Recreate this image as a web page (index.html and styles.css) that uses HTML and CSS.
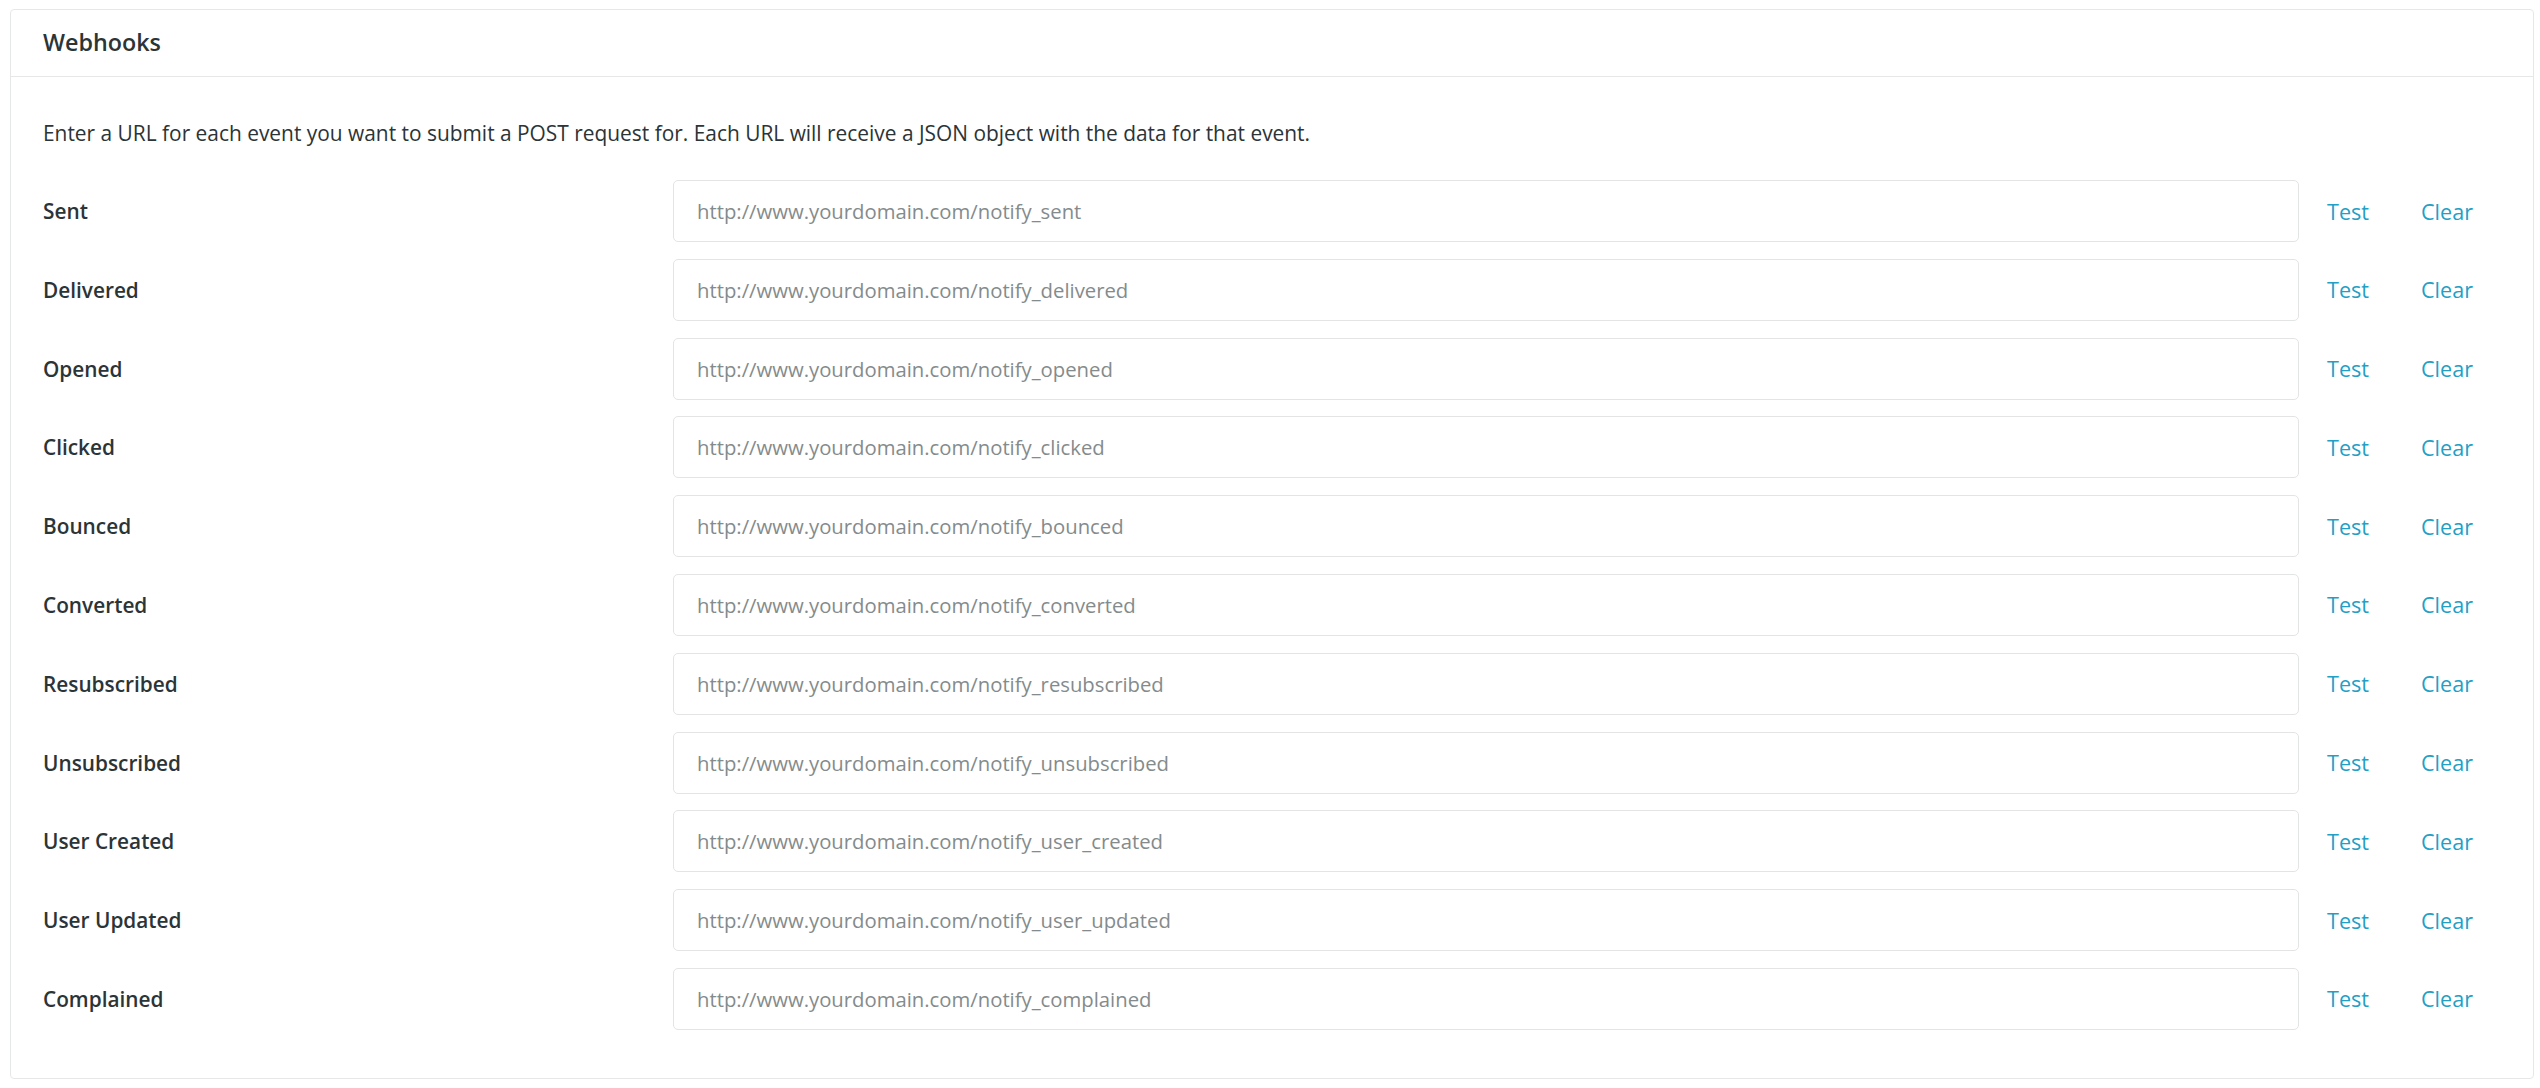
FILE: index.html
```html
<!DOCTYPE html>
<html>
<head>
<meta charset="UTF-8">
<title>Webhooks</title>
<link rel="stylesheet" href="styles.css">
</head>
<body>
<div class="panel">
    <div class="panel-heading">Webhooks</div>
    <div class="panel-body">
        <p class="intro">Enter a URL for each event you want to submit a POST request for. Each URL will receive a JSON object with the data for that event.</p>

        <div class="hook-row">
            <label class="hook-name">Sent</label>
            <input class="hook-url" type="text" placeholder="http://www.yourdomain.com/notify_sent">
            <a class="test" href="javascript:;">Test</a>
            <a class="clear" href="javascript:;">Clear</a>
        </div>
        <div class="hook-row">
            <label class="hook-name">Delivered</label>
            <input class="hook-url" type="text" placeholder="http://www.yourdomain.com/notify_delivered">
            <a class="test" href="javascript:;">Test</a>
            <a class="clear" href="javascript:;">Clear</a>
        </div>
        <div class="hook-row">
            <label class="hook-name">Opened</label>
            <input class="hook-url" type="text" placeholder="http://www.yourdomain.com/notify_opened">
            <a class="test" href="javascript:;">Test</a>
            <a class="clear" href="javascript:;">Clear</a>
        </div>
        <div class="hook-row">
            <label class="hook-name">Clicked</label>
            <input class="hook-url" type="text" placeholder="http://www.yourdomain.com/notify_clicked">
            <a class="test" href="javascript:;">Test</a>
            <a class="clear" href="javascript:;">Clear</a>
        </div>
        <div class="hook-row">
            <label class="hook-name">Bounced</label>
            <input class="hook-url" type="text" placeholder="http://www.yourdomain.com/notify_bounced">
            <a class="test" href="javascript:;">Test</a>
            <a class="clear" href="javascript:;">Clear</a>
        </div>
        <div class="hook-row">
            <label class="hook-name">Converted</label>
            <input class="hook-url" type="text" placeholder="http://www.yourdomain.com/notify_converted">
            <a class="test" href="javascript:;">Test</a>
            <a class="clear" href="javascript:;">Clear</a>
        </div>
        <div class="hook-row">
            <label class="hook-name">Resubscribed</label>
            <input class="hook-url" type="text" placeholder="http://www.yourdomain.com/notify_resubscribed">
            <a class="test" href="javascript:;">Test</a>
            <a class="clear" href="javascript:;">Clear</a>
        </div>
        <div class="hook-row">
            <label class="hook-name">Unsubscribed</label>
            <input class="hook-url" type="text" placeholder="http://www.yourdomain.com/notify_unsubscribed">
            <a class="test" href="javascript:;">Test</a>
            <a class="clear" href="javascript:;">Clear</a>
        </div>
        <div class="hook-row">
            <label class="hook-name">User Created</label>
            <input class="hook-url" type="text" placeholder="http://www.yourdomain.com/notify_user_created">
            <a class="test" href="javascript:;">Test</a>
            <a class="clear" href="javascript:;">Clear</a>
        </div>
        <div class="hook-row">
            <label class="hook-name">User Updated</label>
            <input class="hook-url" type="text" placeholder="http://www.yourdomain.com/notify_user_updated">
            <a class="test" href="javascript:;">Test</a>
            <a class="clear" href="javascript:;">Clear</a>
        </div>
        <div class="hook-row">
            <label class="hook-name">Complained</label>
            <input class="hook-url" type="text" placeholder="http://www.yourdomain.com/notify_complained">
            <a class="test" href="javascript:;">Test</a>
            <a class="clear" href="javascript:;">Clear</a>
        </div>
    </div>
</div>
</body>
</html>
```

FILE: styles.css
```css
* {
	margin: 0;
	padding: 0;
	box-sizing: border-box;
}
body {
	background: #fff;
	color: #2b3437;
	font-family: "Open Sans", Lato, sans-serif;
	font-size: 20px;
}
a {
	color: #239fc6;
	text-decoration: none;
}
a:hover {
	text-decoration: underline;
}
.panel {
	margin: 9px 6px 0 10px;
	border: 1px solid #e6e8e8;
	border-radius: 4px;
	background: #fff;
}
.panel-heading {
	height: 67px;
	padding-left: 32px;
	display: flex;
	align-items: center;
	border-bottom: 1px solid #e6e8e8;
	font-size: 23.3px;
	font-weight: 600;
	padding-bottom: 2px;
}
.panel-body {
	padding: 41px 32px 32px;
}
.intro {
	font-size: 20.9px;
	line-height: 31px;
	margin-bottom: 31px;
}
.hook-row {
	display: flex;
	align-items: center;
	height: 62px;
	margin-bottom: 16.8px;
}
.hook-row:last-child {
	margin-bottom: 16px;
}
.hook-name {
	width: 630px;
	font-size: 20.8px;
	font-weight: 600;
	flex-shrink: 0;
}
.hook-url {
	width: 1626px;
	height: 62px;
	padding: 0 23px;
	border: 1px solid #e3e5e5;
	border-radius: 5px;
	font-family: inherit;
	font-size: 20.3px;
	color: #2b3437;
	outline: none;
}
.hook-url::placeholder {
	color: #848b8c;
}
.test,
.clear {
	font-size: 21.6px;
	font-weight: 500;
}
.test {
	margin-left: 28px;
	width: 94px;
}
```
